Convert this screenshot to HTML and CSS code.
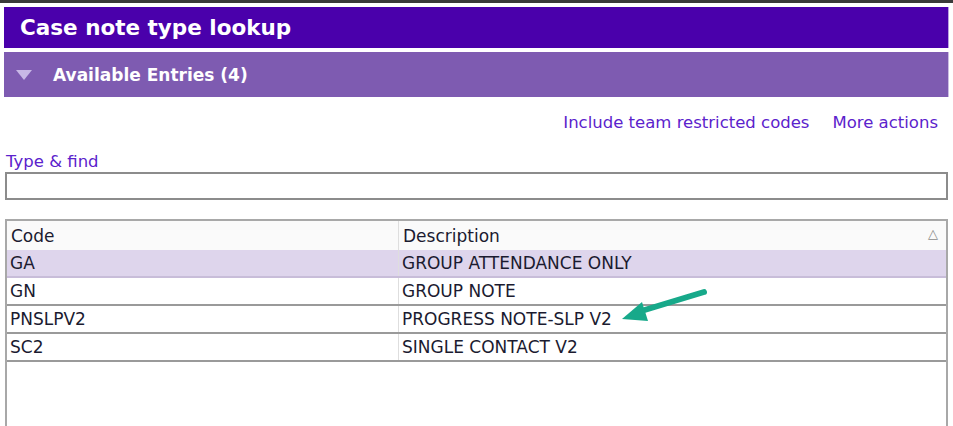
FILE: index.html
```html
<!DOCTYPE html>
<html lang="en">

<head>
    <meta charset="UTF-8">
    <title>Case note type lookup</title>
    <link rel="stylesheet" href="styles.css">
</head>

<body>
    <!-- Lookup panel -->
    <div class="lookup">
        <div class="title-bar">Case note type lookup</div>

        <div class="section-bar">
            <span class="toggle"></span>
            <span>Available Entries (4)</span>
        </div>

        <div class="actions">
            <a href="#">Include team restricted codes</a>
            <a href="#">More actions</a>
        </div>

        <div class="find">
            <label for="find">Type &amp; find</label>
            <input type="text" id="find">
        </div>

        <div class="grid">
            <table>
                <thead>
                    <tr>
                        <th class="col-code">Code</th>
                        <th>Description <span class="sort">&#9651;</span></th>
                    </tr>
                </thead>
                <tbody>
                    <tr class="selected">
                        <td>GA</td>
                        <td>GROUP ATTENDANCE ONLY</td>
                    </tr>
                    <tr>
                        <td>GN</td>
                        <td>GROUP NOTE</td>
                    </tr>
                    <tr>
                        <td>PNSLPV2</td>
                        <td>PROGRESS NOTE-SLP V2</td>
                    </tr>
                    <tr>
                        <td>SC2</td>
                        <td>SINGLE CONTACT V2</td>
                    </tr>
                </tbody>
            </table>

            <!-- Callout arrow -->
            <svg class="arrow" width="110" height="50" viewBox="0 0 110 50">
                <line x1="96" y1="9" x2="30" y2="29" stroke="#17a98a" stroke-width="6" stroke-linecap="round"/>
                <polygon points="14,36 34,19 40,38" fill="#17a98a"/>
            </svg>
        </div>
    </div>
</body>

</html>
```

FILE: styles.css
```css
/* Base styles */
body {
    font-family: "DejaVu Sans", Verdana, sans-serif;
    background-color: #fff;
    margin: 0;
    padding: 0;
    border-top: 3px solid #3a3a3a;
}

.lookup {
    padding: 4px 4px 0 4px;
}

/* Title bars */
.title-bar {
    background-color: #4a00ab;
    color: #fff;
    font-size: 21.5px;
    font-weight: bold;
    height: 41px;
    line-height: 41px;
    padding-left: 16px;
    border-right: 1px solid #b9a3e0;
}

.section-bar {
    margin-top: 4px;
    background-color: #7e5bb1;
    color: #fff;
    font-size: 17px;
    font-weight: bold;
    height: 45px;
    display: flex;
    align-items: center;
    padding-left: 12px;
    border-right: 1px solid #cbbde3;
}

.toggle {
    width: 0;
    height: 0;
    border-left: 8px solid transparent;
    border-right: 8px solid transparent;
    border-top: 10px solid #c8b8e6;
    margin-right: 21px;
}

/* Action links */
.actions {
    display: flex;
    justify-content: flex-end;
    gap: 23px;
    padding: 16px 11px 0 0;
    height: 24px;
}

.actions a,
.find label {
    color: #5b22cc;
    text-decoration: none;
    font-size: 16.5px;
}

/* Type & find */
.find {
    margin-top: 15px;
    padding-left: 2px;
}

.find label {
    display: block;
    margin-bottom: 1px;
}

.find input {
    display: block;
    width: 100%;
    height: 28px;
    box-sizing: border-box;
    border: 2px solid #8c8c8c;
    margin-left: -1px;
    padding: 0;
}

/* Results grid */
.grid {
    position: relative;
    margin-top: 19px;
    border: 2px solid #a8a8a8;
    border-bottom: none;
    height: 220px;
    margin-left: 1px;
    margin-right: 1px;
}

table {
    width: 100%;
    border-collapse: collapse;
    font-size: 17px;
    color: #1b1b30;
}

th {
    background-color: #fafafa;
    font-weight: normal;
    text-align: left;
    height: 29px;
    padding: 0 4px;
    border-left: 1px solid #dedede;
}

th.col-code {
    width: 383px;
    border-left: none;
}

.sort {
    float: right;
    color: #8a8a8a;
    font-size: 13px;
    margin-right: 4px;
}

td {
    height: 26px;
    padding: 0 2px 0 3px;
    border-bottom: 2px solid #9a9a9a;
    border-left: 1px solid #dedede;
}

td:first-child {
    border-left: none;
}

tr.selected td {
    background-color: #ded5ec;
    border-bottom-color: #c8bdd9;
}

/* Callout */
.arrow {
    position: absolute;
    left: 601px;
    top: 62px;
}
```
